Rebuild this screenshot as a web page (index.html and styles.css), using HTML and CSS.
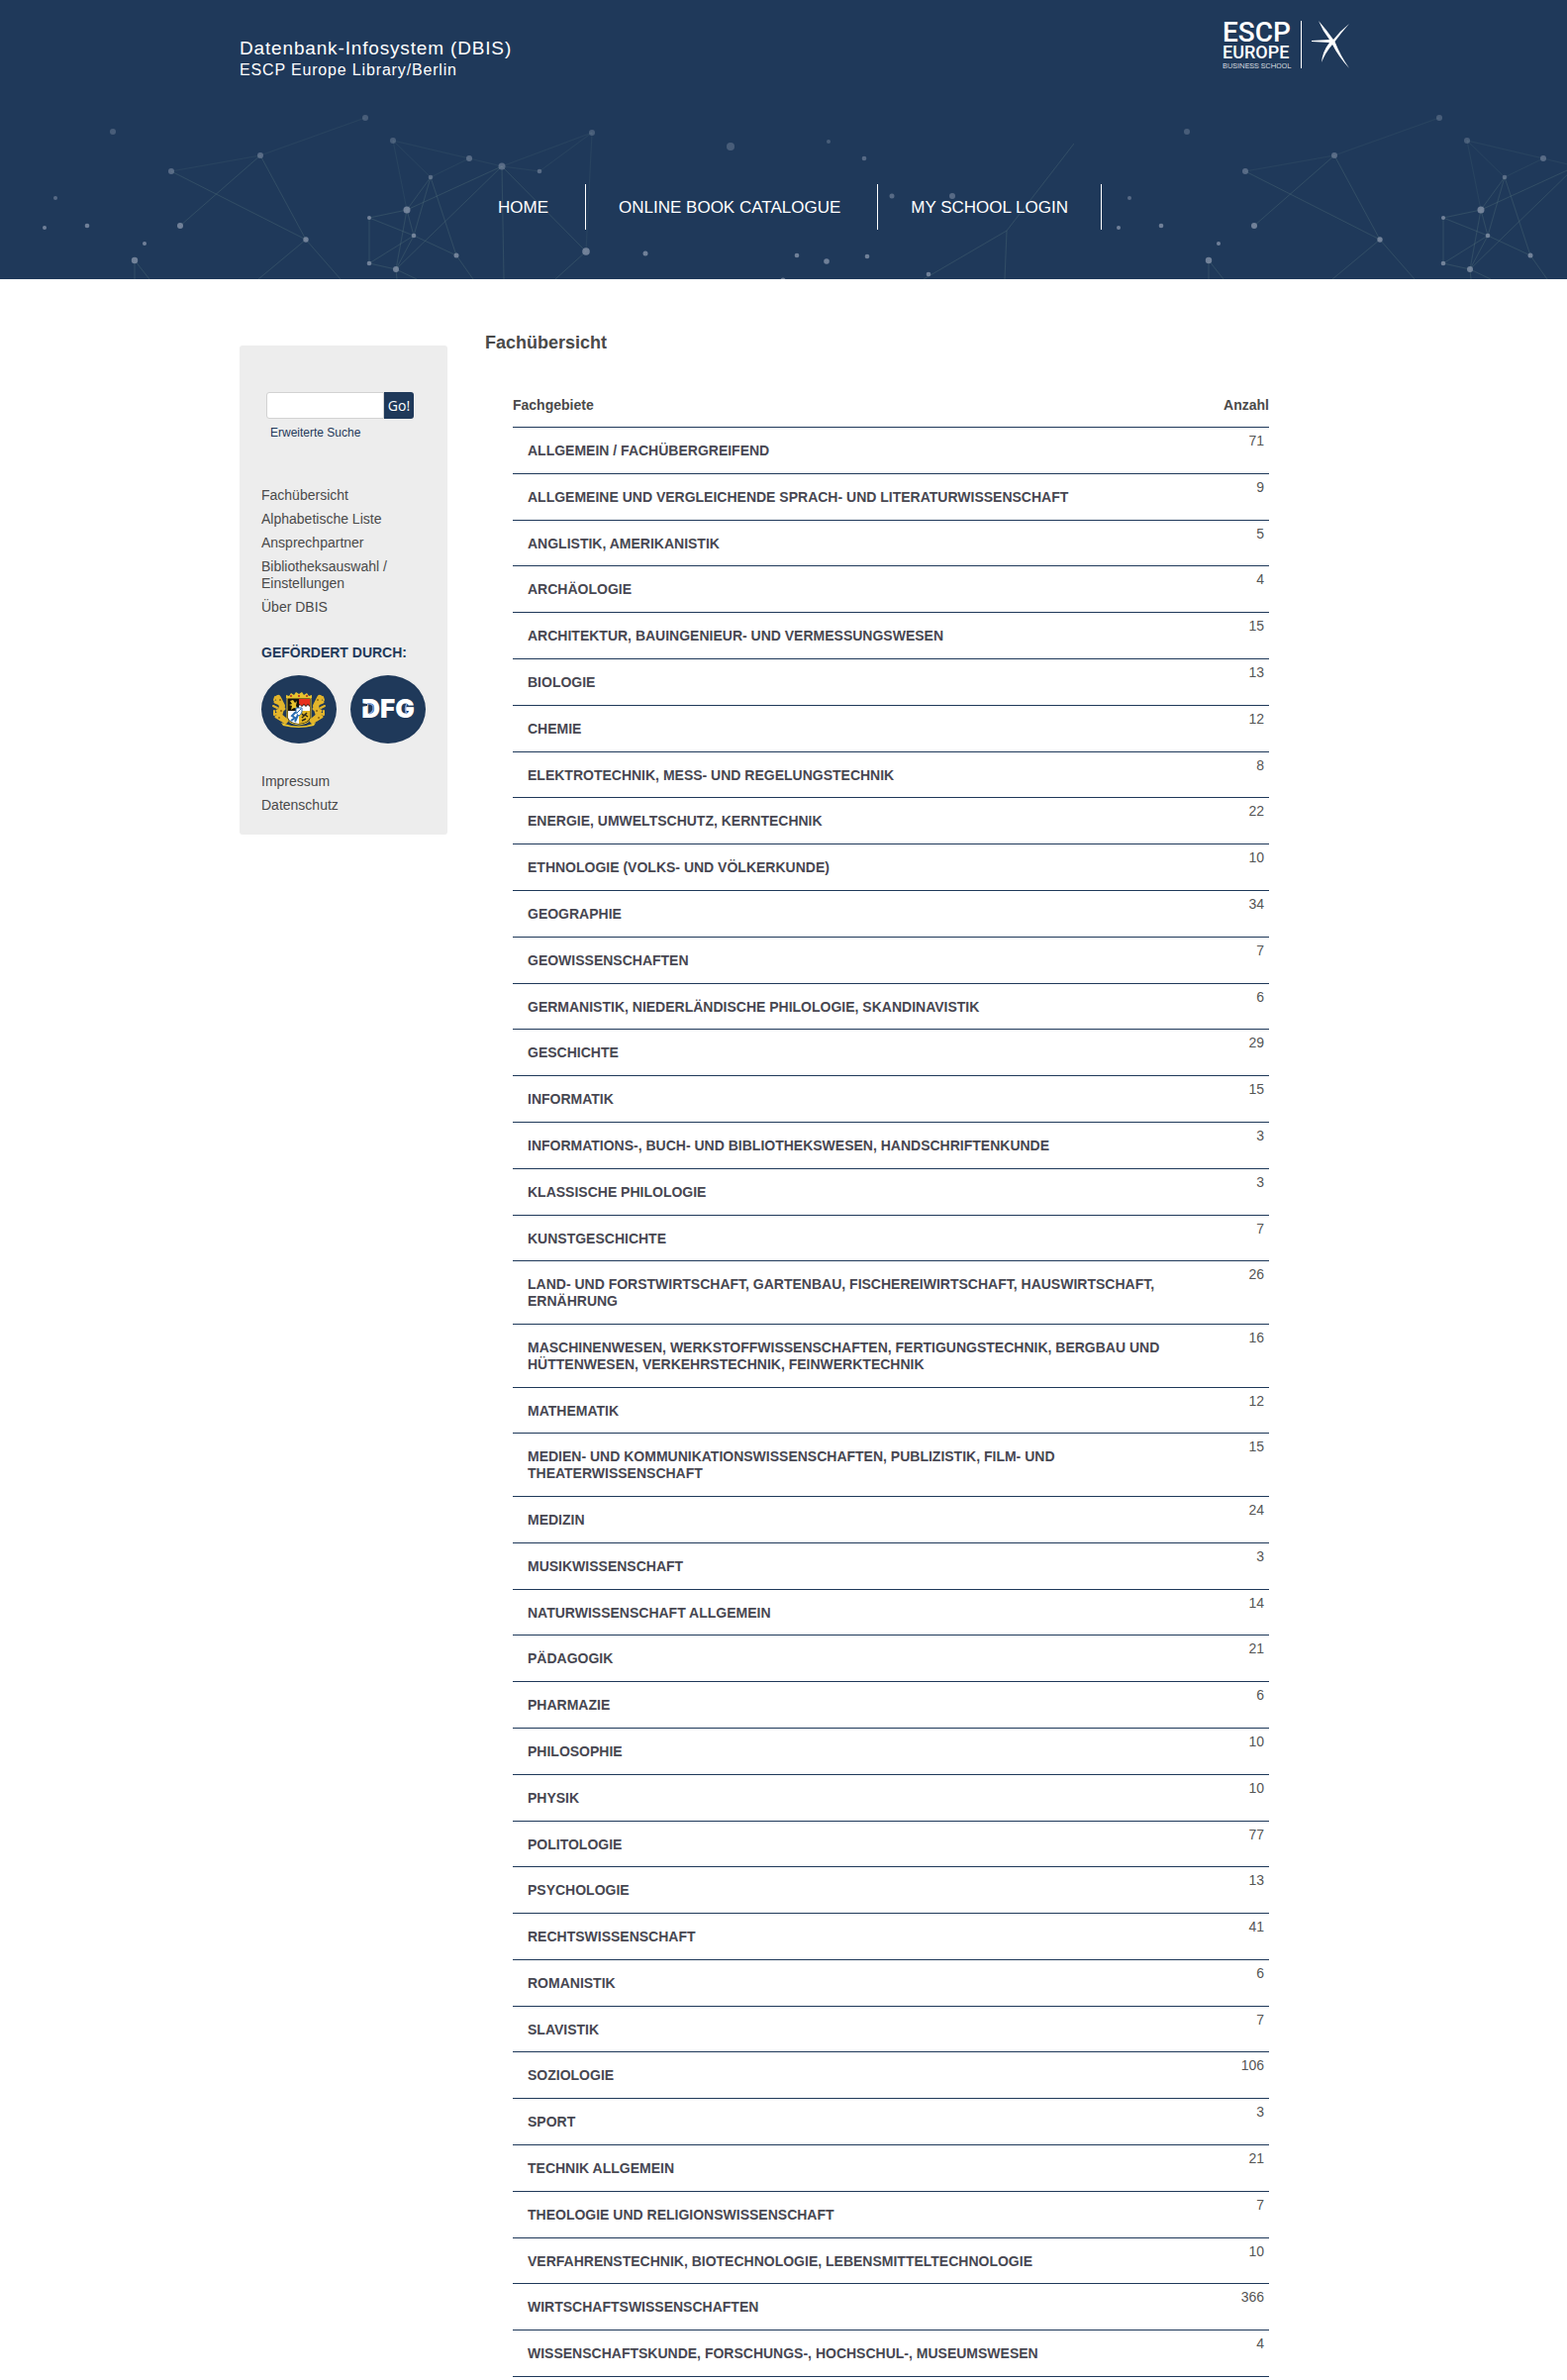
FILE: index.html
```html
<!DOCTYPE html>
<html lang="de">
<head>
<meta charset="utf-8">
<meta name="viewport" content="width=device-width, initial-scale=1">
<title>Datenbank-Infosystem (DBIS) – Fachübersicht</title>
<link rel="stylesheet" href="styles.css">
</head>
<body>
<header class="site-header">
  <svg class="network" aria-hidden="true">
    <defs>
      <pattern id="net" width="1085" height="282" patternUnits="userSpaceOnUse">
        <g fill="none" stroke="#5f8080" stroke-opacity=".27">
          <path stroke-opacity=".14" d="M173 173L263 157L369 119M397 142L474 160L507 168L598 134L545 173L507 168M397 142L435 179L474 160M397 142L411 212M598 134L592 254"/>
          <path d="M173 173L309 242L263 157L182 228M261 282L309 242L344 282M136 263V282M136 263L151 282M411 212L435 179L418 238L411 212L507 168L400 272L411 212L373 220V266L400 272L418 238L373 220M373 266L418 238L461 258L435 179M461 258L478 282M400 272L401 282M400 272L421 282M507 168L509 282M507 168L592 254L561 282M1085 145L1017 233L933 282M1017 233L1015 282"/>
        </g>
        <g fill="#8492a8">
          <g opacity=".4"><circle cx="114" cy="133" r="3"/><circle cx="369" cy="119" r="3"/><circle cx="397" cy="142" r="3"/><circle cx="598" cy="134" r="3"/><circle cx="738" cy="148" r="4"/><circle cx="837" cy="143" r="2"/></g>
          <g opacity=".55"><circle cx="173" cy="173" r="3"/><circle cx="263" cy="157" r="3"/><circle cx="474" cy="160" r="3"/><circle cx="507" cy="168" r="3.5"/><circle cx="435" cy="179" r="2.3"/><circle cx="545" cy="173" r="2.3"/><circle cx="873" cy="160" r="2.3"/><circle cx="901" cy="198" r="2.5"/><circle cx="962" cy="198" r="3"/><circle cx="56" cy="200" r="2"/></g>
          <g opacity=".8"><circle cx="45" cy="230" r="2"/><circle cx="88" cy="228" r="2.3"/><circle cx="146" cy="246" r="2"/><circle cx="136" cy="263" r="3.2"/><circle cx="182" cy="228" r="3"/><circle cx="309" cy="242" r="2.7"/><circle cx="411" cy="212" r="3.5"/><circle cx="373" cy="220" r="2"/><circle cx="418" cy="238" r="2.3"/><circle cx="373" cy="266" r="2.3"/><circle cx="400" cy="272" r="3"/><circle cx="461" cy="258" r="2.5"/><circle cx="592" cy="254" r="3.8"/><circle cx="652" cy="256" r="2.5"/><circle cx="805" cy="258" r="2.3"/><circle cx="835" cy="264" r="2.8"/><circle cx="876" cy="259" r="2.3"/><circle cx="938" cy="277" r="2.3"/><circle cx="791" cy="283" r="2.5"/></g>
        </g>
      </pattern>
    </defs>
    <rect width="100%" height="100%" fill="url(#net)"/>
  </svg>
  <div class="brand">
    <div class="brand-text">
      <h1 class="brand-title">Datenbank-Infosystem (DBIS)</h1>
      <p class="brand-library">ESCP Europe Library/Berlin</p>
    </div>
    <a class="brand-logo" href="#" aria-label="ESCP Europe Business School">
      <svg width="130" height="60" viewBox="0 -8 130 60" fill="#fff">
        <text class="logo-escp" x="0" y="23">ESCP</text>
        <text class="logo-europe" x="0" y="40">EUROPE</text>
        <text class="logo-school" x="0" y="50">BUSINESS SCHOOL</text>
        <rect x="79" y="2" width="1" height="48"/>
        <path d="M97 2Q105 11 112 21Q119 12 128 5Q120 14 113.500 23Q119 37 128 50Q117 38 111 26Q104 34 100 44Q101 33 108 24L90 23V22L108 21Q101 12 97 2Z"/>
      </svg>
    </a>
  </div>
  <nav class="main-nav" aria-label="Hauptnavigation">
    <ul class="main-nav-list">
      <li class="main-nav-item"><a href="#">HOME</a></li>
      <li class="main-nav-item"><a href="#">ONLINE BOOK CATALOGUE</a></li>
      <li class="main-nav-item"><a href="#">MY SCHOOL LOGIN</a></li>
    </ul>
  </nav>
</header>

<div class="page">
  <aside class="sidebar">
    <form class="search">
      <div class="search-row">
        <input class="search-input" type="text" aria-label="Suche">
        <button class="search-button" type="submit">Go!</button>
      </div>
      <a class="search-advanced" href="#">Erweiterte Suche</a>
    </form>
    <ul class="side-menu">
      <li><a href="#">Fachübersicht</a></li>
      <li><a href="#">Alphabetische Liste</a></li>
      <li><a href="#">Ansprechpartner</a></li>
      <li><a href="#">Bibliotheksauswahl / Einstellungen</a></li>
      <li><a href="#">Über DBIS</a></li>
    </ul>
    <h2 class="sponsor-title">GEFÖRDERT DURCH:</h2>
    <div class="sponsors">
      <a class="sponsor" href="#" aria-label="Freistaat Bayern">
        <svg width="76" height="69" viewBox="0 0 76 69">
          <g fill="none" stroke="#e3b52b" stroke-linecap="round" stroke-linejoin="round">
            <path stroke-width="6" d="M17 23L21 31L18 41L24 46M59 23L55 31L58 41L52 46"/>
            <path stroke-width="3" d="M14 27L19 29M16 36L23 34M15 42L20 45M62 27L57 29M60 36L53 34M61 42L56 45"/>
            <path stroke-width="2" d="M14 22L13 25M12 31L16 33M13 36V40L17 38M62 22L63 25M64 31L60 33M63 36V40L59 38"/>
          </g>
          <g fill="#8a6415"><circle cx="19" cy="25" r="1"/><circle cx="20" cy="36" r="1"/><circle cx="18" cy="43" r="1"/><circle cx="57" cy="25" r="1"/><circle cx="56" cy="36" r="1"/><circle cx="58" cy="43" r="1"/></g>
          <path fill="#e8c32e" d="M20 48Q38 55 55 48L53 51Q38 55 22 51Z"/>
          <path fill="#e8c32e" d="M25 23V20L28 21L30 18L33 20L35 17L38 19L41 17L43 20L46 18L48 21L51 20V23Z"/>
          <g fill="#b5271d"><circle cx="30" cy="21" r="1"/><circle cx="38" cy="21" r="1"/><circle cx="46" cy="21" r="1"/></g>
          <path fill="#16130c" stroke="#e8c32e" d="M26 23H50V44Q48 49 38 50Q28 49 26 44Z"/>
          <path fill="#e8c32e" d="M29 26L32 25L34 28L36 26L35 31L37 34L33 33L30 35L31 31L28 30L31 29Z"/>
          <path fill="#e7301c" d="M38 24H49V31L47 29L45 31L43 29L41 31L38 29Z"/>
          <path fill="#fff" d="M38 31L39 30L41 32L43 30L45 32L47 30L49 32V36H38Z"/>
          <path fill="#fff" d="M27 36H38V49Q28 48 27 43Z"/>
          <path fill="none" stroke="#276cb0" stroke-width="2" d="M35 37L31 41L34 43L30 46M37 40L34 47"/>
          <path fill="#e2b622" d="M38 36H49V43Q48 48 38 49Z"/>
          <path fill="none" stroke="#29261a" stroke-width="1.500" d="M41 39L43 41L41 43M46 38L44 40L47 42M41 46L45 44"/>
          <path fill="#fff" stroke="#276cb0" d="M35 33H41V37Q40 40 38 41Q36 40 35 37Z"/>
          <path stroke="#276cb0" stroke-width="1" d="M36 38L40 34"/>
        </svg>
      </a>
      <a class="sponsor" href="#" aria-label="DFG">
        <svg width="76" height="69" viewBox="0 0 76 69">
          <text class="logo-dfg" x="38" y="43" text-anchor="middle">DFG</text>
          <path fill="#1f395a" d="M10 28L17 29V31L10 32Z"/>
          <path fill="none" stroke="#7ba0dc" stroke-width="1.500" d="M17 29Q21 28 23 31V35Q22 38 19 39M57 29Q54 34 57 39"/>
        </svg>
      </a>
    </div>
    <ul class="side-menu">
      <li><a href="#">Impressum</a></li>
      <li><a href="#">Datenschutz</a></li>
    </ul>
  </aside>

  <main class="content">
    <h2 class="content-title">Fachübersicht</h2>
    <table class="subjects">
      <thead>
        <tr><th scope="col">Fachgebiete</th><th class="count" scope="col">Anzahl</th></tr>
      </thead>
      <tbody>
        <tr><td><a href="#">ALLGEMEIN / FACHÜBERGREIFEND</a></td><td class="count">71</td></tr>
        <tr><td><a href="#">ALLGEMEINE UND VERGLEICHENDE SPRACH- UND LITERATURWISSENSCHAFT</a></td><td class="count">9</td></tr>
        <tr><td><a href="#">ANGLISTIK, AMERIKANISTIK</a></td><td class="count">5</td></tr>
        <tr><td><a href="#">ARCHÄOLOGIE</a></td><td class="count">4</td></tr>
        <tr><td><a href="#">ARCHITEKTUR, BAUINGENIEUR- UND VERMESSUNGSWESEN</a></td><td class="count">15</td></tr>
        <tr><td><a href="#">BIOLOGIE</a></td><td class="count">13</td></tr>
        <tr><td><a href="#">CHEMIE</a></td><td class="count">12</td></tr>
        <tr><td><a href="#">ELEKTROTECHNIK, MESS- UND REGELUNGSTECHNIK</a></td><td class="count">8</td></tr>
        <tr><td><a href="#">ENERGIE, UMWELTSCHUTZ, KERNTECHNIK</a></td><td class="count">22</td></tr>
        <tr><td><a href="#">ETHNOLOGIE (VOLKS- UND VÖLKERKUNDE)</a></td><td class="count">10</td></tr>
        <tr><td><a href="#">GEOGRAPHIE</a></td><td class="count">34</td></tr>
        <tr><td><a href="#">GEOWISSENSCHAFTEN</a></td><td class="count">7</td></tr>
        <tr><td><a href="#">GERMANISTIK, NIEDERLÄNDISCHE PHILOLOGIE, SKANDINAVISTIK</a></td><td class="count">6</td></tr>
        <tr><td><a href="#">GESCHICHTE</a></td><td class="count">29</td></tr>
        <tr><td><a href="#">INFORMATIK</a></td><td class="count">15</td></tr>
        <tr><td><a href="#">INFORMATIONS-, BUCH- UND BIBLIOTHEKSWESEN, HANDSCHRIFTENKUNDE</a></td><td class="count">3</td></tr>
        <tr><td><a href="#">KLASSISCHE PHILOLOGIE</a></td><td class="count">3</td></tr>
        <tr><td><a href="#">KUNSTGESCHICHTE</a></td><td class="count">7</td></tr>
        <tr><td><a href="#">LAND- UND FORSTWIRTSCHAFT, GARTENBAU, FISCHEREIWIRTSCHAFT, HAUSWIRTSCHAFT, ERNÄHRUNG</a></td><td class="count">26</td></tr>
        <tr><td><a href="#">MASCHINENWESEN, WERKSTOFFWISSENSCHAFTEN, FERTIGUNGSTECHNIK, BERGBAU UND HÜTTENWESEN, VERKEHRSTECHNIK, FEINWERKTECHNIK</a></td><td class="count">16</td></tr>
        <tr><td><a href="#">MATHEMATIK</a></td><td class="count">12</td></tr>
        <tr><td><a href="#">MEDIEN- UND KOMMUNIKATIONSWISSENSCHAFTEN, PUBLIZISTIK, FILM- UND THEATERWISSENSCHAFT</a></td><td class="count">15</td></tr>
        <tr><td><a href="#">MEDIZIN</a></td><td class="count">24</td></tr>
        <tr><td><a href="#">MUSIKWISSENSCHAFT</a></td><td class="count">3</td></tr>
        <tr><td><a href="#">NATURWISSENSCHAFT ALLGEMEIN</a></td><td class="count">14</td></tr>
        <tr><td><a href="#">PÄDAGOGIK</a></td><td class="count">21</td></tr>
        <tr><td><a href="#">PHARMAZIE</a></td><td class="count">6</td></tr>
        <tr><td><a href="#">PHILOSOPHIE</a></td><td class="count">10</td></tr>
        <tr><td><a href="#">PHYSIK</a></td><td class="count">10</td></tr>
        <tr><td><a href="#">POLITOLOGIE</a></td><td class="count">77</td></tr>
        <tr><td><a href="#">PSYCHOLOGIE</a></td><td class="count">13</td></tr>
        <tr><td><a href="#">RECHTSWISSENSCHAFT</a></td><td class="count">41</td></tr>
        <tr><td><a href="#">ROMANISTIK</a></td><td class="count">6</td></tr>
        <tr><td><a href="#">SLAVISTIK</a></td><td class="count">7</td></tr>
        <tr><td><a href="#">SOZIOLOGIE</a></td><td class="count">106</td></tr>
        <tr><td><a href="#">SPORT</a></td><td class="count">3</td></tr>
        <tr><td><a href="#">TECHNIK ALLGEMEIN</a></td><td class="count">21</td></tr>
        <tr><td><a href="#">THEOLOGIE UND RELIGIONSWISSENSCHAFT</a></td><td class="count">7</td></tr>
        <tr><td><a href="#">VERFAHRENSTECHNIK, BIOTECHNOLOGIE, LEBENSMITTELTECHNOLOGIE</a></td><td class="count">10</td></tr>
        <tr><td><a href="#">WIRTSCHAFTSWISSENSCHAFTEN</a></td><td class="count">366</td></tr>
        <tr><td><a href="#">WISSENSCHAFTSKUNDE, FORSCHUNGS-, HOCHSCHUL-, MUSEUMSWESEN</a></td><td class="count">4</td></tr>
      </tbody>
    </table>
  </main>
</div>
</body>
</html>
```

FILE: styles.css
```css
:root {
  --navy: #1f395a;
  --text: #4a4a4a;
}

* {
  box-sizing: border-box;
}

body {
  margin: 0;
  background: #fff;
  color: var(--text);
  font-family: "Liberation Sans", Arial, sans-serif;
  font-size: 14px;
  line-height: 1.2;
}

h1,
h2,
p,
ul {
  margin: 0;
  padding: 0;
}

ul {
  list-style: none;
}

a {
  color: inherit;
  text-decoration: none;
}

/* Header */
.site-header {
  position: relative;
  padding-bottom: 50px;
  background: var(--navy);
  color: #fff;
}

.network {
  position: absolute;
  inset: 0;
  width: 100%;
  height: 100%;
}

.brand,
.page {
  display: flex;
  max-width: 1099px;
  margin: 0 auto;
}

.brand {
  position: relative;
  justify-content: space-between;
  height: 186px;
  padding-top: 11px;
}

.brand-text {
  padding-top: 27px;
  letter-spacing: 0.06em;
}

.brand-title {
  font-size: 19px;
  font-weight: 400;
  line-height: 22px;
}

.brand-library {
  font-size: 16px;
  line-height: 22px;
}

/* The logo hangs over the right edge of the grid. */
.brand-logo {
  height: 60px;
  margin-right: -24px;
}

.brand-logo svg,
.sponsor svg {
  display: block;
}

.logo-escp {
  font: 500 28px Roboto, sans-serif;
}

.logo-europe {
  font: 500 18px Roboto, sans-serif;
}

.logo-school {
  font: 300 8px Roboto, sans-serif;
}

.main-nav {
  position: relative;
}

.main-nav-list {
  display: flex;
  justify-content: center;
  gap: 4px;
}

.main-nav-item a {
  display: block;
  padding: 1px 33px 0;
  font-size: 17px;
  line-height: 45px;
}

.main-nav-item + .main-nav-item {
  border-left: 1px solid #fff;
}

.main-nav-item:last-child {
  border-right: 1px solid #fff;
}

/* Body */
.page {
  align-items: flex-start;
  padding-bottom: 3px;
}

.sidebar {
  flex: 0 0 210px;
  margin-top: 67px;
  padding: 47px 22px 21px;
  border-radius: 3px;
  background: #ededed;
}

.search {
  padding: 0 12px 0 5px;
}

.search-row {
  display: flex;
}

.search-input {
  width: 119px;
  height: 27px;
  padding: 0 6px;
  border: 1px solid #d2d2d2;
  border-radius: 3px 0 0 3px;
  background: #fff;
}

.search-button {
  width: 30px;
  height: 27px;
  padding: 0;
  border: 0;
  border-radius: 0 3px 3px 0;
  background: var(--navy);
  color: #fff;
  font: 14px "Open Sans", sans-serif;
}

.search-advanced {
  display: block;
  padding: 7px 4px 0;
  color: var(--navy);
  font-size: 12px;
  line-height: 14px;
}

.side-menu {
  display: grid;
  gap: 7px;
  line-height: 17px;
}

.search + .side-menu {
  margin-top: 48px;
}

.sponsor-title {
  margin: 29px 0 14px;
  color: var(--navy);
  font-size: 14px;
  line-height: 17px;
}

.sponsors {
  display: flex;
  gap: 14px;
  margin-bottom: 30px;
}

.sponsor {
  flex: 0 0 76px;
  border-radius: 50%;
  background: var(--navy);
}

.logo-dfg {
  fill: #fff;
  font: 900 26px Inter, "Liberation Sans", sans-serif;
}

.content {
  flex: 1;
  margin-top: 53px;
  padding: 0 59px 0 38px;
}

.content-title {
  font-size: 18px;
  line-height: 22px;
}

.subjects {
  width: calc(100% - 28px);
  margin: 43px 0 0 28px;
  border-collapse: separate;
  border-spacing: 0;
}

.subjects th {
  padding: 0 0 13px;
  border-bottom: 1px solid var(--navy);
  font-size: 14px;
  line-height: 18px;
  text-align: left;
}

.subjects td {
  padding: 15px 0 14px 15px;
  border-bottom: 1px solid var(--navy);
  vertical-align: top;
}

.subjects td a {
  color: #474751;
  font-weight: 700;
}

.subjects .count {
  width: 100px;
  text-align: right;
}

.subjects td.count {
  padding: 5px 5px 0 0;
  color: #555;
}
```
